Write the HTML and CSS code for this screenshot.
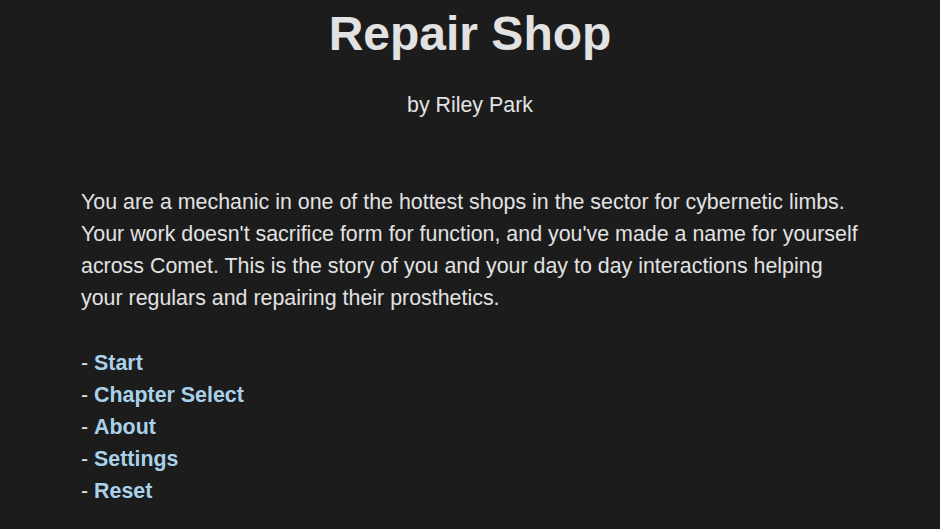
FILE: index.html
```html
<!DOCTYPE html>
<html>
<head>
<meta charset="utf-8">
<link rel="stylesheet" href="styles.css">
</head>
<body>
<main class="page">
  <h1 class="title">Repair Shop</h1>
  <p class="byline">by Riley Park</p>
  <p class="intro">You are a mechanic in one of the hottest shops in the sector for cybernetic limbs. Your work doesn't sacrifice form for function, and you've made a name for yourself across Comet. This is the story of you and your day to day interactions helping your regulars and repairing their prosthetics.</p>
  <ul class="menu">
    <li>- <a href="#">Start</a></li>
    <li>- <a href="#">Chapter Select</a></li>
    <li>- <a href="#">About</a></li>
    <li>- <a href="#">Settings</a></li>
    <li>- <a href="#">Reset</a></li>
  </ul>
</main>
</body>
</html>
```
FILE: styles.css
```css
html, body {
  margin: 0;
  padding: 0;
  background: #1c1c1c;
}
body {
  font-family: "Liberation Sans", Arial, sans-serif;
  color: #e2e2e2;
}
.page {
  width: 778px;
  margin: 0 auto;
  padding-top: 6px;
}
.title {
  margin: 0;
  text-align: center;
  font-size: 48px;
  font-weight: bold;
  line-height: 56px;
}
.byline {
  margin: 27px 0 0;
  text-align: center;
  font-size: 21.4px;
  line-height: 32px;
}
.intro {
  margin: 65px 0 0;
  font-size: 21.4px;
  line-height: 32px;
}
.menu {
  list-style: none;
  margin: 33px 0 0;
  padding: 0;
  font-size: 21.4px;
  line-height: 32px;
}
.menu a {
  color: #a9d1e9;
  font-weight: bold;
  text-decoration: none;
}
```
